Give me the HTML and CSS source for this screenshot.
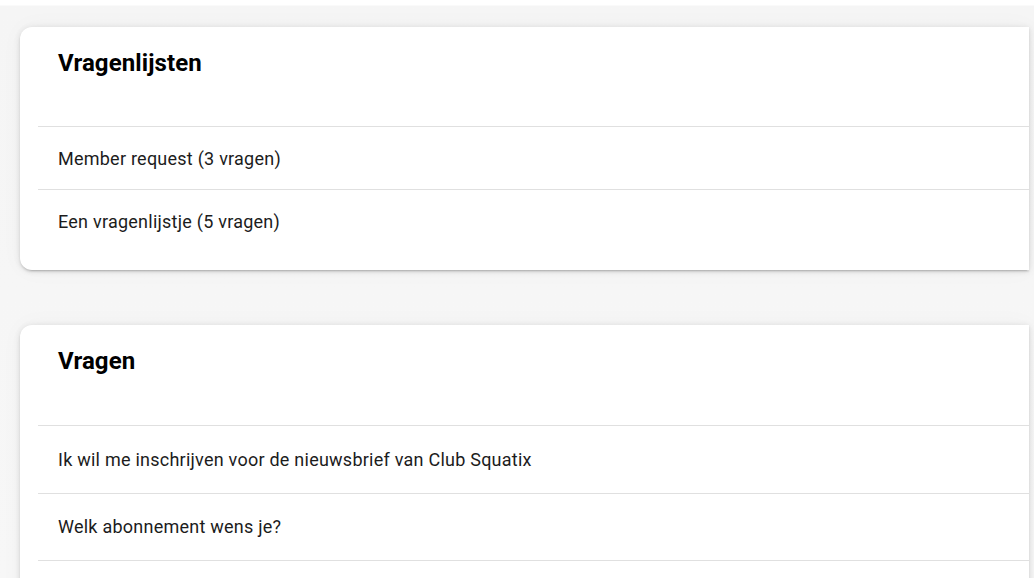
FILE: index.html
```html
<!DOCTYPE html>
<html lang="nl">
<head>
<meta charset="utf-8">
<title>Vragenlijsten</title>
<link rel="stylesheet" href="styles.css">
</head>
<body>
<div class="page">
  <section class="card">
    <h2 class="card-title">Vragenlijsten</h2>
    <ul class="list">
      <li class="row">Member request (3 vragen)</li>
      <li class="row">Een vragenlijstje (5 vragen)</li>
    </ul>
  </section>
  <section class="card">
    <h2 class="card-title card-title-tall">Vragen</h2>
    <ul class="list list-tall">
      <li class="row">Ik wil me inschrijven voor de nieuwsbrief van Club Squatix</li>
      <li class="row">Welk abonnement wens je?</li>
      <li class="row">&nbsp;</li>
    </ul>
  </section>
</div>
</body>
</html>
```

FILE: styles.css
```css
html, body {
  margin: 0;
  padding: 0;
  height: 100%;
  overflow: hidden;
}
body {
  background: linear-gradient(#ffffff 0, #ffffff 5px, #f5f5f5 6px, #f7f7f7 100%);
  font-family: Roboto, "Liberation Sans", Arial, sans-serif;
  color: #1c1c1c;
}
.page {
  display: flex;
  flex-direction: column;
  gap: 55px;
  padding: 27px 5px 0 20px;
}
.card {
  background: #ffffff;
  border-radius: 12px 0 0 12px;
  box-shadow: 0 2px 2px rgba(0,0,0,0.10), 0 3px 1px -2px rgba(0,0,0,0.10), 0 1px 6px rgba(0,0,0,0.12), 0 0 24px rgba(0,0,0,0.03);
  padding-bottom: 18px;
}
.card-title {
  margin: 0;
  height: 99px;
  box-sizing: border-box;
  padding: 21px 0 0 38px;
  font-size: 24px;
  line-height: 30px;
  font-weight: 700;
  letter-spacing: 0.1px;
  color: #000000;
}
.card-title-tall {
  height: 100px;
}
.list {
  list-style: none;
  margin: 0 0 0 18px;
  padding: 0;
}
.row {
  border-top: 1px solid #e0e0e0;
  height: 62px;
  display: flex;
  align-items: center;
  padding-left: 20px;
  font-size: 18px;
  letter-spacing: 0.24px;
}
.list-tall .row {
  height: 66.5px;
}
```
